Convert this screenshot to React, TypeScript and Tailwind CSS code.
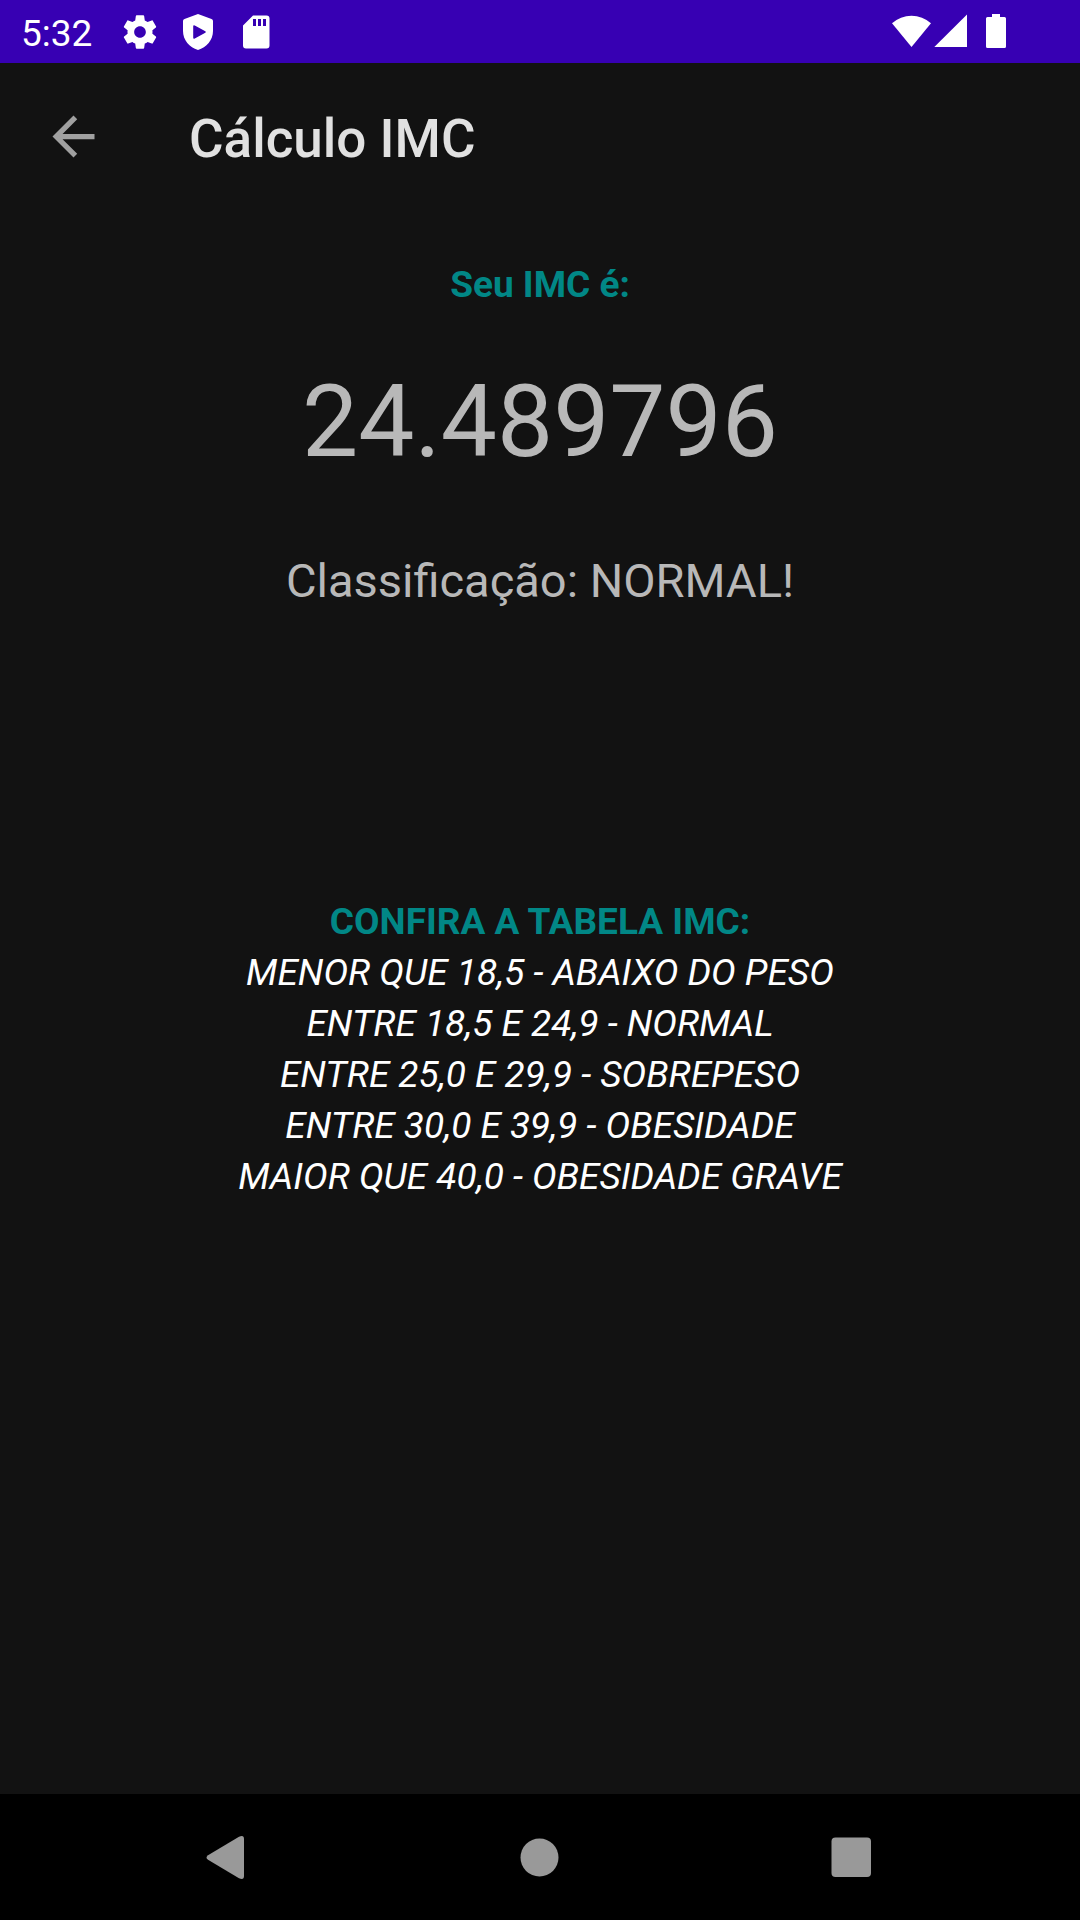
const ranges = [
  'MENOR QUE 18,5 - ABAIXO DO PESO',
  'ENTRE 18,5 E 24,9 - NORMAL',
  'ENTRE 25,0 E 29,9 - SOBREPESO',
  'ENTRE 30,0 E 39,9 - OBESIDADE',
  'MAIOR QUE 40,0 - OBESIDADE GRAVE',
];

function GearIcon() {
  return (
    <svg className="size-10" viewBox="0 0 24 24" fill="currentColor" aria-hidden="true">
      <path d="M19.43 12.98c.04-.32.07-.64.07-.98s-.03-.66-.07-.98l2.11-1.65c.19-.15.24-.42.12-.64l-2-3.46c-.12-.22-.39-.3-.61-.22l-2.49 1c-.52-.4-1.08-.73-1.69-.98l-.38-2.65C14.46 2.18 14.25 2 14 2h-4c-.25 0-.46.18-.49.42l-.38 2.65c-.61.25-1.17.59-1.69.98l-2.49-1c-.23-.09-.49 0-.61.22l-2 3.46c-.13.22-.07.49.12.64l2.11 1.65c-.04.32-.07.65-.07.98s.03.66.07.98l-2.11 1.65c-.19.15-.24.42-.12.64l2 3.46c.12.22.39.3.61.22l2.49-1c.52.4 1.08.73 1.69.98l.38 2.65c.03.24.24.42.49.42h4c.25 0 .46-.18.49-.42l.38-2.65c.61-.25 1.17-.59 1.69-.98l2.49 1c.23.09.49 0 .61-.22l2-3.46c.12-.22.07-.49-.12-.64l-2.11-1.65zM12 15.5c-1.93 0-3.5-1.57-3.5-3.5s1.57-3.5 3.5-3.5 3.5 1.57 3.5 3.5-1.57 3.5-3.5 3.5z" />
    </svg>
  );
}

function ShieldIcon() {
  return (
    <svg className="size-10" viewBox="0 0 40 40" fill="currentColor" aria-hidden="true">
      <path
        fillRule="evenodd"
        d="M20 2L33.500 7Q35 7.600 35 9V19C35 28 28.500 35.500 20 38C11.500 35.500 5 28 5 19V9Q5 7.600 6.500 7ZM15.200 14.500V25.500Q15.200 27.300 16.800 26.500L27.300 20.800Q28.500 20 27.300 19.200L16.800 13.500Q15.200 12.700 15.200 14.500Z"
      />
    </svg>
  );
}

function SdCardIcon() {
  return (
    <svg className="size-10" viewBox="0 0 40 40" fill="currentColor" aria-hidden="true">
      <path
        fillRule="evenodd"
        d="M17 3.500H30.500Q33.500 3.500 33.500 6.500V33.500Q33.500 36.500 30.500 36.500H10Q7 36.500 7 33.500V13.500ZM17 7V14H20V7ZM22 7V14H25V7ZM27 7V14H30V7Z"
      />
    </svg>
  );
}

function StatusBar() {
  return (
    <div className="flex h-[63px] items-center justify-between bg-[#3700b3] pl-[21px] pr-[74px] text-white">
      <div className="flex items-center gap-[18px]">
        <span className="mr-2.5 pt-1 text-[37px] leading-[44px]">5:32</span>
        <GearIcon />
        <ShieldIcon />
        <SdCardIcon />
      </div>
      <svg className="h-9 w-[114px]" viewBox="0 0 114 36" fill="currentColor" aria-hidden="true">
        <path d="M0 9.300A29 29 0 0 1 39 9.300L19.500 33Z" />
        <path d="M75 0.500V33H42.300Z" />
        <path d="M100 0H108V3H112.500Q114 3 114 4.500V32.500Q114 34 112.500 34H95.500Q94 34 94 32.500V4.500Q94 3 95.500 3H100Z" />
      </svg>
    </div>
  );
}

function AppBar() {
  return (
    <header className="flex h-[147px] items-center pl-[42px]">
      <button type="button" aria-label="Voltar" className="mr-[84px] size-[63px] text-[#a0a0a0]">
        <svg className="size-[63px]" viewBox="0 0 24 24" fill="currentColor" aria-hidden="true">
          <path d="M20 11H7.830l5.590-5.590L12 4l-8 8 8 8 1.410-1.410L7.830 13H20v-2z" />
        </svg>
      </button>
      <h1 className="pt-1 text-[53px] leading-[62px] font-medium text-[#e1e1e1]">Cálculo IMC</h1>
    </header>
  );
}

function NavBar() {
  return (
    <nav className="grid h-[126px] grid-cols-3 items-center justify-items-center bg-black px-[73px] text-[#999999]">
      <button type="button" aria-label="Voltar">
        <svg className="size-[63px]" viewBox="0 0 63 63" fill="currentColor" aria-hidden="true">
          <path d="M11 29.200L42 10.700Q47 8.500 47 13V50Q47 54.500 42 52.300L11 33.800Q8 31.500 11 29.200Z" />
        </svg>
      </button>
      <button type="button" aria-label="Início">
        <svg className="size-[63px]" viewBox="0 0 63 63" fill="currentColor" aria-hidden="true">
          <circle cx="31.500" cy="31.500" r="19" />
        </svg>
      </button>
      <button type="button" aria-label="Recentes">
        <svg className="size-[63px]" viewBox="0 0 63 63" fill="currentColor" aria-hidden="true">
          <rect x="11.500" y="11.500" width="39.500" height="39.500" rx="4" />
        </svg>
      </button>
    </nav>
  );
}

export default function App() {
  return (
    <div className="flex min-h-screen flex-col bg-[#121212] font-[Roboto,sans-serif]">
      <StatusBar />
      <AppBar />
      <main className="flex flex-1 flex-col items-center pt-[53px] text-center text-[#b8b8b8]">
        <h2 className="text-[37px] leading-[44px] font-bold text-[#018786]">Seu IMC é:</h2>
        <p className="mt-14 text-[100px] leading-[118px]">24.489796</p>
        <p className="mt-[72px] text-[47px] leading-[56px]">Classificação: NORMAL!</p>
        <section className="mt-[287px] text-[37px] leading-[51px]">
          <h2 className="font-bold text-[#018786]">CONFIRA A TABELA IMC:</h2>
          <ul className="text-white italic">
            {ranges.map((range) => (
              <li key={range}>{range}</li>
            ))}
          </ul>
        </section>
      </main>
      <NavBar />
    </div>
  );
}
